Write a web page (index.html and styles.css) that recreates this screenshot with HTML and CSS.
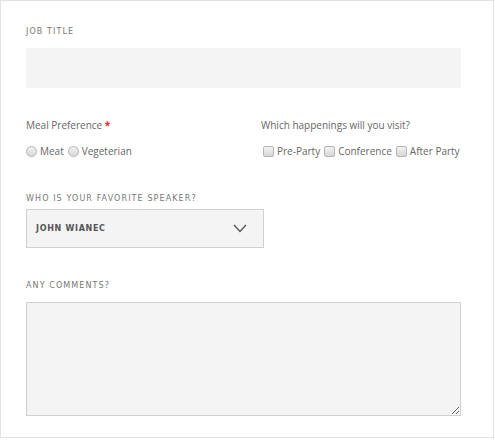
FILE: index.html
```html
<!DOCTYPE html>
<html lang="en">
<head>
<meta charset="UTF-8" />
<meta name="viewport" content="width=device-width, initial-scale=1" />
<title>Registration Form</title>
<link rel="stylesheet" href="styles.css">
</head>
<body>

<form class="event-form">

  <!-- Job title -->
  <label class="caps-label" for="jobTitle">Job Title</label>
  <input type="text" id="jobTitle" class="text-field" />

  <!-- Meal & happenings -->
  <div class="two-col">
    <div class="col-left">
      <p class="field-label">Meal Preference <span class="required">*</span></p>
      <div class="choice-row">
        <label><input type="radio" name="meal" class="radio" /> Meat</label>
        <label><input type="radio" name="meal" class="radio" /> Vegeterian</label>
      </div>
    </div>
    <div class="col-right">
      <p class="field-label">Which happenings will you visit?</p>
      <div class="choice-row">
        <label><input type="checkbox" class="check" /> Pre-Party</label>
        <label><input type="checkbox" class="check" /> Conference</label>
        <label><input type="checkbox" class="check" /> After Party</label>
      </div>
    </div>
  </div>

  <!-- Speaker -->
  <label class="caps-label speaker-label">Who is your favorite speaker?</label>
  <div class="select-box">
    <span>John Wianec</span>
    <svg width="14" height="9" viewBox="0 0 14 9">
      <polyline points="1,1 7,7.5 13,1" fill="none" stroke="#555" stroke-width="1.3" />
    </svg>
  </div>

  <!-- Comments -->
  <label class="caps-label comments-label" for="comments">Any comments?</label>
  <textarea id="comments" class="comments"></textarea>

</form>

</body>
</html>
```

FILE: styles.css
```css
body {
  margin: 0;
  padding: 0;
  background-color: #fff;
  font-family: "Open Sans", Arial, sans-serif;
}

.event-form {
  box-sizing: border-box;
  width: 494px;
  height: 438px;
  border: 1px solid #e3e3e3;
  padding: 23px 32px 0 25px;
  display: flex;
  flex-direction: column;
}

.caps-label {
  display: block;
  font-family: "DejaVu Sans", sans-serif;
  font-size: 8px;
  line-height: 12px;
  padding-top: 2px;
  letter-spacing: 1.1px;
  text-transform: uppercase;
  color: #777;
  margin-bottom: 10px;
}

.text-field {
  height: 40px;
  border: none;
  background-color: #f4f4f4;
  margin: 0;
  padding: 0 10px;
  box-sizing: border-box;
  width: 100%;
}

.two-col {
  display: grid;
  grid-template-columns: 235px 1fr;
  margin-top: 29px;
}

.field-label {
  margin: 0 0 10px 0;
  font-size: 10px;
  line-height: 16px;
  color: #666;
}

.required {
  color: #e02b27;
  font-weight: bold;
}

.choice-row {
  display: flex;
  gap: 4px;
  font-size: 10px;
  line-height: 16px;
  color: #666;
  white-space: nowrap;
}

.choice-row label {
  display: flex;
  align-items: center;
  gap: 3px;
}

.radio,
.check {
  appearance: none;
  margin: 0;
  width: 11px;
  height: 11px;
  border: 1px solid #b5b5b5;
  background: linear-gradient(#f2f2f2, #d8d8d8);
  box-sizing: border-box;
  flex-shrink: 0;
}

.radio {
  border-radius: 50%;
}

.check {
  border-radius: 2px;
}

.col-right .choice-row {
  padding-left: 2px;
}

.speaker-label {
  margin-top: 32px;
  margin-bottom: 4px;
}

.select-box {
  box-sizing: border-box;
  width: 238px;
  height: 39px;
  border: 1px solid #d0d0d0;
  background-color: #f4f4f4;
  display: flex;
  align-items: center;
  justify-content: space-between;
  padding: 0 16px 0 9px;
}

.select-box span {
  font-family: "DejaVu Sans", sans-serif;
  font-size: 8px;
  font-weight: bold;
  letter-spacing: 0.7px;
  text-transform: uppercase;
  color: #555;
}

.comments-label {
  margin-top: 30px;
}

.comments {
  box-sizing: border-box;
  width: 100%;
  height: 114px;
  margin: 0;
  border: 1px solid #d0d0d0;
  background-color: #f4f4f4;
  resize: both;
}
```
